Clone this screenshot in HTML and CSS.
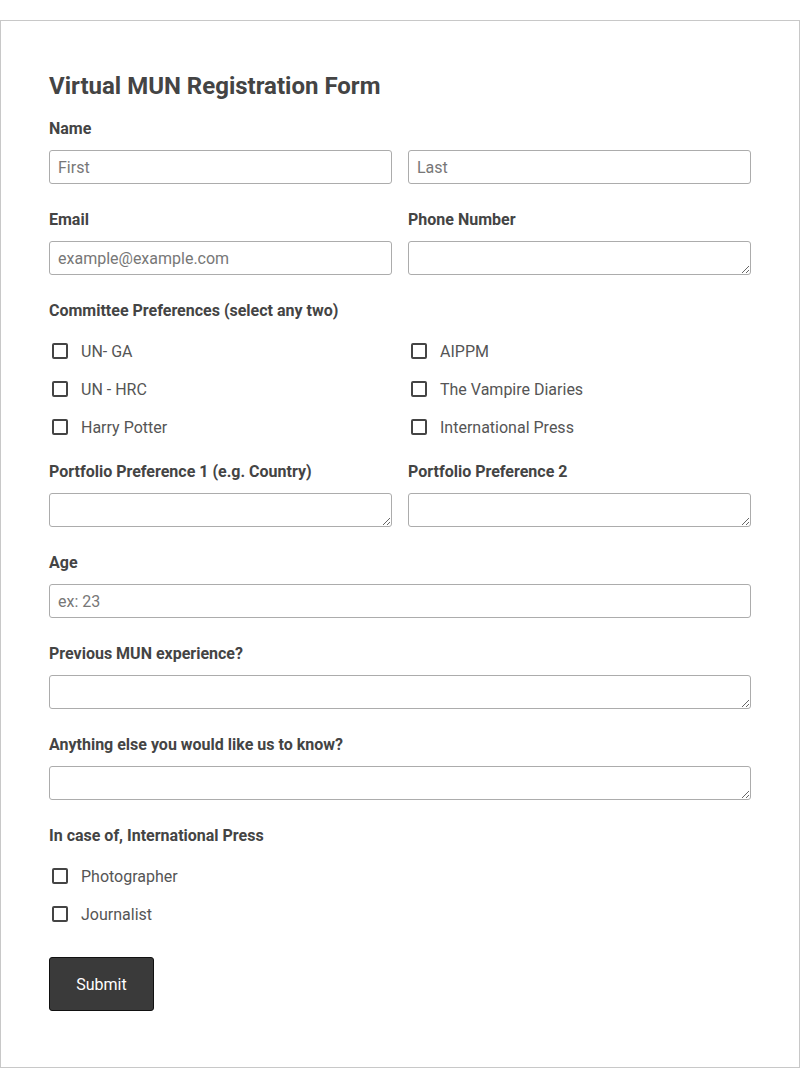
FILE: index.html
```html
<!DOCTYPE html>
<html lang="en">
<head>
    <meta charset="UTF-8">
    <meta name="viewport" content="width=device-width, initial-scale=1.0">
    <title>Virtual MUN Registration Form</title>
    <link rel="stylesheet" href="styles.css">
</head>
<body>
    <form class="formular">
        <h1 class="nadpis">Virtual MUN Registration Form</h1>

        <div class="pole">
            <label class="popis">Name</label>
            <div class="dva-sloupce">
                <input class="vstup" type="text" placeholder="First">
                <input class="vstup" type="text" placeholder="Last">
            </div>
        </div>

        <div class="dva-sloupce">
            <div class="pole">
                <label class="popis">Email</label>
                <input class="vstup" type="email" placeholder="example@example.com">
            </div>
            <div class="pole">
                <label class="popis">Phone Number</label>
                <textarea class="vstup oblast"></textarea>
            </div>
        </div>

        <div class="pole">
            <label class="popis">Committee Preferences (select any two)</label>
            <div class="zaskrtavatka dva-sloupce">
                <label class="volba"><input type="checkbox" class="box"> UN- GA</label>
                <label class="volba"><input type="checkbox" class="box"> AIPPM</label>
                <label class="volba"><input type="checkbox" class="box"> UN - HRC</label>
                <label class="volba"><input type="checkbox" class="box"> The Vampire Diaries</label>
                <label class="volba"><input type="checkbox" class="box"> Harry Potter</label>
                <label class="volba"><input type="checkbox" class="box"> International Press</label>
            </div>
        </div>

        <div class="dva-sloupce">
            <div class="pole">
                <label class="popis">Portfolio Preference 1 (e.g. Country)</label>
                <textarea class="vstup oblast"></textarea>
            </div>
            <div class="pole">
                <label class="popis">Portfolio Preference 2</label>
                <textarea class="vstup oblast"></textarea>
            </div>
        </div>

        <div class="pole">
            <label class="popis">Age</label>
            <input class="vstup" type="text" placeholder="ex: 23">
        </div>

        <div class="pole">
            <label class="popis">Previous MUN experience?</label>
            <textarea class="vstup oblast"></textarea>
        </div>

        <div class="pole">
            <label class="popis">Anything else you would like us to know?</label>
            <textarea class="vstup oblast"></textarea>
        </div>

        <div class="pole">
            <label class="popis">In case of, International Press</label>
            <div class="zaskrtavatka">
                <label class="volba"><input type="checkbox" class="box"> Photographer</label>
                <label class="volba"><input type="checkbox" class="box"> Journalist</label>
            </div>
        </div>

        <button type="submit" class="tlacitko">Submit</button>
    </form>
</body>
</html>
```

FILE: styles.css
```css
body {
    margin: 0;
    padding-top: 20px;
    background: #fff;
    font-family: Roboto, "Liberation Sans", sans-serif;
    color: #444;
}

.formular {
    border: 1px solid #c8c8c8;
    padding: 49px 48px 55px;
    height: 1048px;
    box-sizing: border-box;
}

.nadpis {
    font-size: 24px;
    line-height: 32px;
    font-weight: bold;
    margin: 0 0 17px;
    color: #444;
}

.pole {
    margin-bottom: 26px;
}

.popis {
    display: block;
    font-size: 16px;
    line-height: 20px;
    font-weight: bold;
    margin-bottom: 11px;
}

.dva-sloupce {
    display: grid;
    grid-template-columns: 1fr 1fr;
    column-gap: 16px;
}

.vstup {
    display: block;
    width: 100%;
    height: 34px;
    box-sizing: border-box;
    border: 1px solid #acacac;
    border-radius: 3px;
    padding: 0 8px;
    font-family: inherit;
    font-size: 16px;
    color: #444;
    background: #fff;
    margin: 0;
}

.vstup::placeholder {
    color: #777;
}

.oblast {
    padding: 6px 8px;
    resize: vertical;
}

/* seznam zaskrtavatek */
.zaskrtavatka {
    margin-top: 11px;
    margin-bottom: -10px;
}

.volba {
    display: flex;
    align-items: center;
    height: 38px;
    font-size: 16px;
    color: #555;
}

.box {
    appearance: none;
    width: 16px;
    height: 16px;
    margin: 0 13px 0 3px;
    border: 2px solid #444;
    border-radius: 2px;
    box-sizing: border-box;
    background: #fff;
}

/* okraj se slucuje s okrajem posledniho pole */
.tlacitko {
    display: block;
    margin-top: 34px;
    width: 105px;
    height: 54px;
    background-color: #3a3a3a;
    color: #fff;
    border: 1px solid #111;
    border-radius: 3px;
    font-family: inherit;
    font-size: 16px;
    cursor: pointer;
}
```
